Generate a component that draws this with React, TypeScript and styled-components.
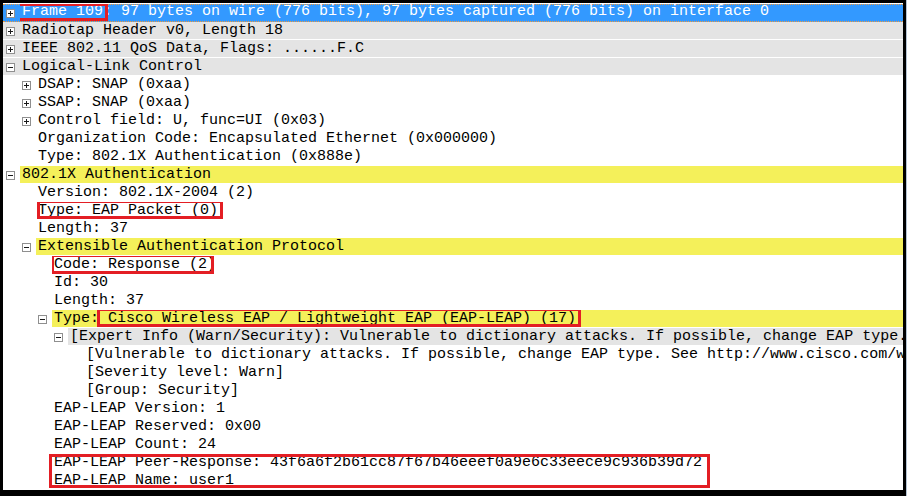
import React from "react";
import styled, { createGlobalStyle } from "styled-components";

const GlobalStyle = createGlobalStyle`
  html, body {
    margin: 0;
    padding: 0;
    background: #b4c3d3;
  }
`;

const Pane = styled.div`
  width: 906px;
  height: 496px;
  box-sizing: border-box;
  border: solid #000;
  border-width: 3px 3px 6px 3px;
  padding-top: 1px;
  background: #ffffff;
  overflow: hidden;
  font-family: "Liberation Mono", "DejaVu Sans Mono", monospace;
  font-size: 15px;
  color: #000;
`;

type RowKind = "selected" | "gray" | "plain";
type LabelKind = "yellow" | "gray" | "none";

const band = (color: string) =>
  `linear-gradient(${color}, ${color}) top left / 100% 17px no-repeat`;

const Row = styled.div<{ $level: number; $kind: RowKind }>`
  display: flex;
  align-items: center;
  height: 18px;
  box-sizing: border-box;
  white-space: pre;
  padding-left: ${({ $level }) => 3 + $level * 16}px;
  background: ${({ $kind }) =>
    $kind === "selected" ? "#3399ff" : $kind === "gray" ? band("#e4e4e4") : "transparent"};
  color: ${({ $kind }) => ($kind === "selected" ? "#ffffff" : "#000000")};
  border-top: ${({ $kind }) => ($kind === "selected" ? "1px dotted #f29a3a" : "none")};
  border-bottom: ${({ $kind }) => ($kind === "selected" ? "1px dotted #f29a3a" : "none")};
  line-height: ${({ $kind }) => ($kind === "selected" ? "16px" : "18px")};
`;

const Label = styled.div<{ $hl: LabelKind }>`
  flex: 1;
  min-width: 0;
  height: 18px;
  margin-left: -2px;
  padding-left: 2px;
  overflow: hidden;
  background: ${({ $hl }) =>
    $hl === "yellow" ? band("#f4f05a") : $hl === "gray" ? band("#e4e4e4") : "transparent"};
`;

const ToggleSlot = styled.span`
  display: inline-flex;
  width: 16px;
  height: 9px;
  flex-shrink: 0;
`;

const Mark = styled.span<{ $l: number; $r: number; $t: number; $b: number }>`
  position: relative;
  display: inline-block;
  height: 18px;
  white-space: pre;

  &::after {
    content: "";
    position: absolute;
    left: ${({ $l }) => -$l}px;
    right: ${({ $r }) => -$r}px;
    top: ${({ $t }) => -$t}px;
    bottom: ${({ $b }) => -$b}px;
    border: 3px solid #e31e24;
    pointer-events: none;
  }
`;

const Group = styled.div`
  position: relative;

  &::after {
    content: "";
    position: absolute;
    left: 46px;
    width: 661px;
    top: 0;
    bottom: 2px;
    box-sizing: border-box;
    border: 3px solid #e31e24;
    pointer-events: none;
  }
`;

const Toggle = ({ open }: { open?: boolean }) => (
  <ToggleSlot>
    <svg width="9" height="9" viewBox="0 0 9 9">
      <rect x="0.5" y="0.5" width="8" height="8" fill="#ffffff" stroke="#8f8f8f" />
      <path d="M2 4.5h5" stroke="#1a1a1a" />
      {!open && <path d="M4.5 2v5" stroke="#1a1a1a" />}
    </svg>
  </ToggleSlot>
);

type Node = {
  level: number;
  exp?: "open" | "closed";
  kind?: RowKind;
  hl?: LabelKind;
  content: React.ReactNode;
};

const TreeRow = ({ level, exp, kind = "plain", hl = "none", content }: Node) => (
  <Row $level={level} $kind={kind}>
    {exp ? <Toggle open={exp === "open"} /> : <ToggleSlot />}
    <Label $hl={hl}>{content}</Label>
  </Row>
);

const upper: Node[] = [
  {
    level: 0,
    exp: "closed",
    kind: "selected",
    content: (
      <>
        <Mark $l={8} $r={5} $t={1} $b={-1}>
          Frame 109
        </Mark>
        : 97 bytes on wire (776 bits), 97 bytes captured (776 bits) on interface 0
      </>
    ),
  },
  { level: 0, exp: "closed", kind: "gray", content: "Radiotap Header v0, Length 18" },
  { level: 0, exp: "closed", kind: "gray", content: "IEEE 802.11 QoS Data, Flags: ......F.C" },
  { level: 0, exp: "open", kind: "gray", content: "Logical-Link Control" },
  { level: 1, exp: "closed", content: "DSAP: SNAP (0xaa)" },
  { level: 1, exp: "closed", content: "SSAP: SNAP (0xaa)" },
  { level: 1, exp: "closed", content: "Control field: U, func=UI (0x03)" },
  { level: 1, content: "Organization Code: Encapsulated Ethernet (0x000000)" },
  { level: 1, content: "Type: 802.1X Authentication (0x888e)" },
  { level: 0, exp: "open", hl: "yellow", content: "802.1X Authentication" },
  { level: 1, content: "Version: 802.1X-2004 (2)" },
  {
    level: 1,
    content: (
      <Mark $l={1} $r={5} $t={2} $b={-1}>
        Type: EAP Packet (0)
      </Mark>
    ),
  },
  { level: 1, content: "Length: 37" },
  { level: 1, exp: "open", hl: "yellow", content: "Extensible Authentication Protocol" },
  {
    level: 2,
    content: (
      <Mark $l={3} $r={-2} $t={2} $b={0}>
        Code: Response (2)
      </Mark>
    ),
  },
  { level: 2, content: "Id: 30" },
  { level: 2, content: "Length: 37" },
  {
    level: 2,
    exp: "open",
    hl: "yellow",
    content: (
      <>
        Type:
        <Mark $l={2} $r={5} $t={2} $b={-1}>
          {" Cisco Wireless EAP / Lightweight EAP (EAP-LEAP) (17)"}
        </Mark>
      </>
    ),
  },
  {
    level: 3,
    exp: "open",
    hl: "gray",
    content:
      "[Expert Info (Warn/Security): Vulnerable to dictionary attacks. If possible, change EAP type.]",
  },
  {
    level: 4,
    content:
      "[Vulnerable to dictionary attacks. If possible, change EAP type. See http://www.cisco.com/warp/public/707/cisco-sn-20030802-leap.shtml]",
  },
  { level: 4, content: "[Severity level: Warn]" },
  { level: 4, content: "[Group: Security]" },
  { level: 2, content: "EAP-LEAP Version: 1" },
  { level: 2, content: "EAP-LEAP Reserved: 0x00" },
  { level: 2, content: "EAP-LEAP Count: 24" },
];

const boxed: Node[] = [
  {
    level: 2,
    content: "EAP-LEAP Peer-Response: 43f6a6f2b61cc87f67b46eeef0a9e6c33eece9c936b39d72",
  },
  { level: 2, content: "EAP-LEAP Name: user1" },
];

const App = () => {
  return (
    <>
      <GlobalStyle />
      <Pane>
        {upper.map((node, i) => (
          <TreeRow key={i} {...node} />
        ))}
        <Group>
          {boxed.map((node, i) => (
            <TreeRow key={i} {...node} />
          ))}
        </Group>
      </Pane>
    </>
  );
};

export default App;
